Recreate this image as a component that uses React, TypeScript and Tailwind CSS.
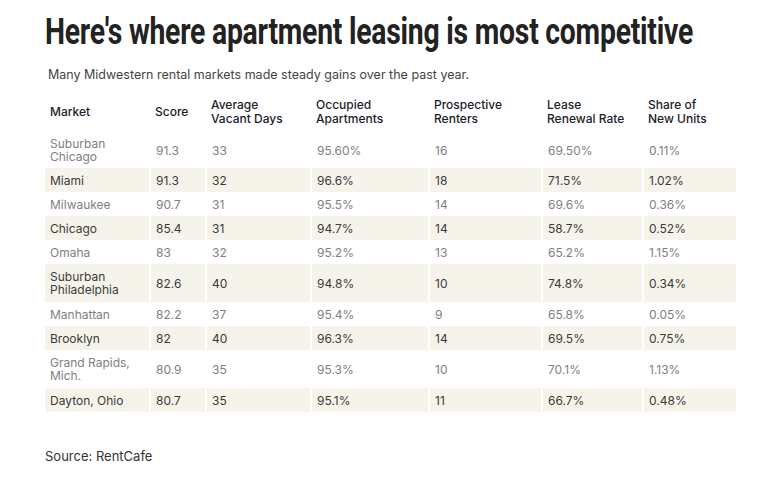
import React from 'react';

type Row = [string, string, string, string, string, string, string];

const rows: Row[] = [
	['Suburban Chicago', '91.3', '33', '95.60%', '16', '69.50%', '0.11%'],
	['Miami', '91.3', '32', '96.6%', '18', '71.5%', '1.02%'],
	['Milwaukee', '90.7', '31', '95.5%', '14', '69.6%', '0.36%'],
	['Chicago', '85.4', '31', '94.7%', '14', '58.7%', '0.52%'],
	['Omaha', '83', '32', '95.2%', '13', '65.2%', '1.15%'],
	['Suburban Philadelphia', '82.6', '40', '94.8%', '10', '74.8%', '0.34%'],
	['Manhattan', '82.2', '37', '95.4%', '9', '65.8%', '0.05%'],
	['Brooklyn', '82', '40', '96.3%', '14', '69.5%', '0.75%'],
	['Grand Rapids, Mich.', '80.9', '35', '95.3%', '10', '70.1%', '1.13%'],
	['Dayton, Ohio', '80.7', '35', '95.1%', '11', '66.7%', '0.48%'],
];

// header lines, already split the way the chart wraps them
const headers: string[][] = [
	['Market'],
	['Score'],
	['Average', 'Vacant Days'],
	['Occupied', 'Apartments'],
	['Prospective', 'Renters'],
	['Lease', 'Renewal Rate'],
	['Share of', 'New Units'],
];

const widths = ['w-[105px]', 'w-[56px]', 'w-[105px]', 'w-[118px]', 'w-[113px]', 'w-[101px]', 'w-[93px]'];

export default function App() {
	return (
		<div className="w-[782px] h-[482px] bg-white font-['Inter','Liberation_Sans',sans-serif] overflow-hidden">
			<div className="pl-[45px] pt-[10px]">
				<h1 className="w-max whitespace-nowrap origin-left scale-x-[0.766] font-['Roboto','Liberation_Sans',sans-serif] font-bold text-[37px] leading-[44px] tracking-[-0.3px] text-[#222]">
					Here's where apartment leasing is most competitive
				</h1>
				<p className="mt-[13px] pl-[3px] text-[12.5px] leading-[16px] text-[#444]">
					Many Midwestern rental markets made steady gains over the past year.
				</p>

				<table className="mt-[12px] w-[691px] border-collapse table-fixed text-[12px] leading-[13px]">
					<thead>
						<tr>
							{headers.map((h, i) => (
								<th
									key={h[0]}
									className={`${widths[i]} h-[37px] px-[5px] pb-[4px] text-left align-middle font-medium leading-[13.5px] text-[#1c1c2a]`}
								>
									{h.map((line) => (
										<span key={line} className="block whitespace-nowrap">
											{line}
										</span>
									))}
								</th>
							))}
						</tr>
					</thead>
					<tbody>
						{rows.map((r, ri) => {
							const striped = ri % 2 === 1;
							const twoLine = r[0].length > 14;
							const height = !twoLine ? 'h-[24px]' : ri === 0 ? 'h-[36px]' : 'h-[38px]';
							return (
								<tr
									key={r[0]}
									className={`${striped ? 'bg-[#f6f4ea] text-[#3a3a3a]' : 'bg-white text-[#808080]'} ${height}`}
								>
									{r.map((c, ci) => (
										<td
											key={ci}
											className={`px-[5px] align-middle ${ci < 6 ? 'border-r-2 border-white' : ''}`}
										>
											{ci === 0 && twoLine ? <span className="block max-w-[85px]">{c}</span> : c}
										</td>
									))}
								</tr>
							);
						})}
					</tbody>
				</table>

				<p className="mt-[36px] text-[13px] leading-[16px] text-[#333]">Source: RentCafe</p>
			</div>
		</div>
	);
}
